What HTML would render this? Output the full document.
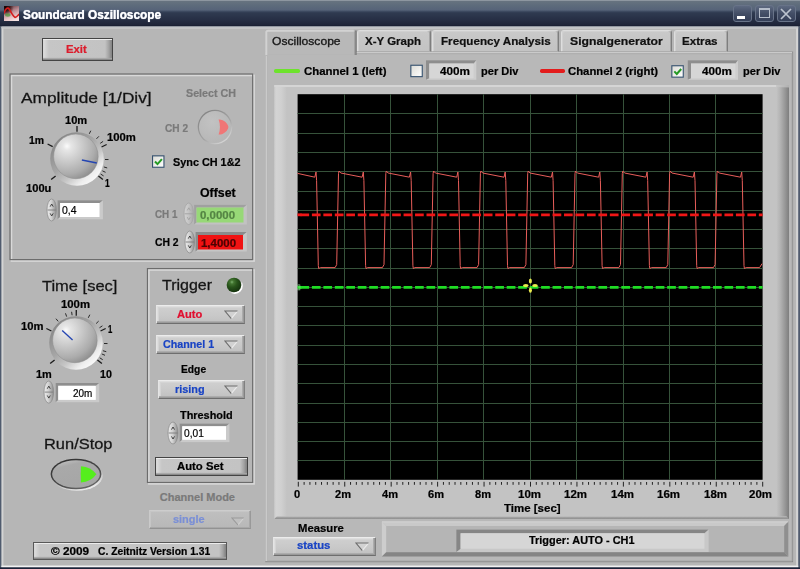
<!DOCTYPE html>
<html><head><meta charset="utf-8"><title>Soundcard Oszilloscope</title>
<style>
*{box-sizing:border-box;margin:0;padding:0}
html,body{width:800px;height:569px;overflow:hidden;background:#b6b6b6;font-family:"Liberation Sans",sans-serif;}
#w{position:absolute;left:0;top:0;width:800px;height:569px;background:#b6b6b6;overflow:hidden}
.a{position:absolute}
.t{position:absolute;white-space:nowrap;font-weight:bold;transform-origin:0 50%;-webkit-text-stroke:.22px}

#title{left:0;top:0;width:800px;height:27px;z-index:0;background:linear-gradient(#8d96a0 0,#8d96a0 1px,#66727f 1.5px,#5c6a7b 6px,#566379 10px,#354158 12px,#2f3a50 13px,#262e44 20px,#1f2539 24.6px,#1a1e32 25.8px,#4a4e5c 26.5px,#4a4e5c 27px)}
.wb{position:absolute;top:5px;width:19px;height:17px;border-radius:3px;border:1px solid #687388;background:linear-gradient(#5d6980,#434e66 50%,#353f58)}
.btn{position:absolute;border:1px solid #444;background:linear-gradient(90deg,#e0e0e0 0,#d2d2d2 3px,#c6c6c6 6px,#c3c3c3 calc(100% - 7px),#a2a2a2 calc(100% - 3px),#7e7e7e 100%);box-shadow:inset 0 1px 0 #ececec,inset 0 -1px 0 #8a8a8a,inset 0 -2px 1px #a6a6a6}
.dd{position:absolute;background:linear-gradient(#d0d0d0,#c8c8c8 60%,#c0c0c0);border:1px solid;border-color:#ececec #808080 #6e6e6e #e4e4e4;box-shadow:inset -1px -1px 0 #9a9a9a,inset -2px -2px 0 #acacac,inset 1px 1px 0 #dedede,inset 2px 2px 0 #d4d4d4}
.inp{position:absolute;background:#fff;border:1px solid;border-color:#6e6e6e #dcdcdc #e4e4e4 #6e6e6e;box-shadow:-1px -1px 0 #9c9c9c}
.fld{position:absolute;border:1px solid;border-color:#7a7a7a #d8d8d8 #dedede #7a7a7a;box-shadow:-1px -1px 0 #9a9a9a,inset 1px 1px 0 #a8a8a8}
.panel{position:absolute;border:1px solid;border-color:#8a8a8a #e6e6e6 #e6e6e6 #8a8a8a;box-shadow:inset 1px 1px 0 #dadada,inset -1px -1px 0 #9a9a9a}
.tab{position:absolute;top:30px;height:22.4px;background:linear-gradient(#c9c9c9,#c3c3c3);border:1px solid;border-color:#dcdcdc #7e7e7e #c3c3c3 #dedede;border-radius:3px 3px 0 0;box-shadow:inset -1px 0 0 #a6a6a6,inset 1px 1px 0 #d0d0d0}
.cb{position:absolute;width:12.6px;height:12.6px;border:1px solid #1c5180;background:linear-gradient(135deg,#dcdcd7,#ffffff)}

</style></head><body>
<div id="w">
<div class="a" id="title"></div>
<svg class="a" style="left:0;top:26px" width="800" height="543" viewBox="0 26 800 543"><rect x="0" y="26.4" width="800" height="542.6" fill="#505b6e"/><rect x="1.4" y="27" width="796.8" height="540.4" fill="#d4d4d4"/><rect x="1.4" y="26.4" width="796.8" height="2" fill="#c2c3c7"/><rect x="3.4" y="28.6" width="792.7" height="537" fill="#b6b6b6"/><rect x="1.4" y="565.7" width="796.8" height="1.7" fill="#f2f2f2"/><rect x="0" y="567.4" width="800" height="1.6" fill="#1c2238"/></svg>
<svg class="a" style="left:3.9px;top:5.9px" width="15.2" height="15.2" viewBox="0 0 16 16"><defs><linearGradient id="ig" x1=".2" y1="0" x2=".6" y2="1"><stop offset="0" stop-color="#5a3a40"/><stop offset=".4" stop-color="#b88890"/><stop offset=".75" stop-color="#e8c4c6"/><stop offset="1" stop-color="#f4e2e2"/></linearGradient><radialGradient id="ib" cx="10%" cy="8%" r="55%"><stop offset="0" stop-color="#100000"/><stop offset=".5" stop-color="#300808" stop-opacity=".8"/><stop offset="1" stop-color="#401010" stop-opacity="0"/></radialGradient></defs><rect width="16" height="16" fill="url(#ig)"/><rect width="16" height="16" fill="url(#ib)"/><ellipse cx="4" cy="9.4" rx="3" ry="1.8" fill="#4c9a3c" opacity=".75"/><path d="M0 7.6 C1.5 3,3.6 0.8,5.4 3.2 C7.5 6,9.5 11,11.8 12 C13 12,14.5 10,16 8.6" fill="none" stroke="#d41c1c" stroke-width="1.7"/></svg>
<div class="wb" style="left:732.5px"></div><div class="wb" style="left:754.5px"></div><div class="wb" style="left:776.5px"></div>
<div class="a" style="left:737px;top:15.7px;width:7.5px;height:3.3px;background:#fff"></div>
<div class="a" style="left:759px;top:8.4px;width:10.5px;height:10px;border:1px solid #b4bcc9;border-top:2.6px solid #b4bcc9"></div>
<svg class="a" style="left:778px;top:6px" width="16" height="16"><path d="M3 3 L13 13 M13 3 L3 13" stroke="#bcc3cf" stroke-width="1.7" fill="none"/></svg>
<div class="tab" style="left:357px;width:73.5px"></div>
<div class="tab" style="left:431.8px;width:127.6px"></div>
<div class="tab" style="left:561px;width:111px"></div>
<div class="tab" style="left:673.8px;width:54px"></div>
<svg class="a" style="left:260px;top:48px" width="540" height="520" viewBox="260 48 540 520"><rect x="265.3" y="51.6" width="527.8" height="510.6" fill="#858585"/><rect x="265.3" y="51.9" width="526.9" height="509.3" fill="#cacaca"/><rect x="267.3" y="53.2" width="524.9" height="508" fill="#a8a8a8"/><rect x="267.3" y="54.2" width="524.2" height="506.2" fill="#b8b8b8"/></svg>
<svg class="a" style="left:260px;top:26px" width="110" height="34" viewBox="260 26 110 34"><path d="M265.3 56 V32.5 Q265.3 30 267.8 30 H353.5 Q356.2 30 356.2 32.5 V54.6 H267.3 V56Z" fill="#b8b8b8" stroke="none"/><path d="M355.9 30.6 V55" stroke="#666" stroke-width="1.2" fill="none"/><path d="M354.7 31.4 V55" stroke="#a0a0a0" stroke-width="1.2" fill="none"/><path d="M266.3 55 V32.5 Q266.3 30.8 268.2 30.8 H353.8" stroke="#d2d2d2" stroke-width="1.9" fill="none"/></svg>
<div class="btn" style="left:42px;top:38px;width:70.5px;height:22.5px"></div>
<div class="btn" style="left:33px;top:542.3px;width:194px;height:17.5px;border-color:#585858"></div>
<div class="btn" style="left:154.5px;top:457px;width:93.5px;height:18.5px"></div>
<svg class="a" style="left:7px;top:71px" width="251" height="194" viewBox="7 71 251 194"><rect x="11.45" y="75.45" width="242.65" height="185.6" fill="none" stroke="#d9d9d9" stroke-width="1.6"/><rect x="10" y="74" width="242.65" height="185.6" fill="none" stroke="#6c6c6c" stroke-width="1.15"/></svg>
<svg class="a" style="left:144px;top:265px" width="114" height="222" viewBox="144 265 114 222"><rect x="148.9" y="270" width="105.2" height="213.9" fill="none" stroke="#d9d9d9" stroke-width="1.6"/><rect x="147.45" y="268.55" width="105.2" height="213.9" fill="none" stroke="#6c6c6c" stroke-width="1.15"/></svg>
<svg class="a" style="left:36.8px;top:119.4px" width="80" height="80" viewBox="-40 -40 80 80"><defs><radialGradient id="kd76" cx="30%" cy="27%" r="78%"><stop offset="0" stop-color="#fbfbfb"/><stop offset=".12" stop-color="#e6e6e6"/><stop offset=".4" stop-color="#cecece"/><stop offset=".8" stop-color="#acacac"/><stop offset="1" stop-color="#929292"/></radialGradient><linearGradient id="kr76" x1="0.15" y1="0.1" x2="0.85" y2="0.9"><stop offset="0" stop-color="#868686"/><stop offset=".42" stop-color="#a6a6a6"/><stop offset=".66" stop-color="#c6c6c6"/><stop offset=".86" stop-color="#eeeeee"/><stop offset="1" stop-color="#fafafa"/></linearGradient><filter id="kb76"><feGaussianBlur stdDeviation=".6"/></filter></defs><line x1="-21.37" y1="16.99" x2="-25.83" y2="20.54" stroke="#1a1a1a" stroke-width="1.3"/><line x1="-24.32" y1="-12.39" x2="-29.40" y2="-14.98" stroke="#1a1a1a" stroke-width="1.3"/><line x1="0.00" y1="-27.30" x2="0.00" y2="-33.00" stroke="#1a1a1a" stroke-width="1.3"/><line x1="24.54" y1="-11.97" x2="29.66" y2="-14.47" stroke="#1a1a1a" stroke-width="1.3"/><line x1="21.42" y1="16.92" x2="25.90" y2="20.45" stroke="#1a1a1a" stroke-width="1.3"/><line x1="12.27" y1="-25.17" x2="13.81" y2="-28.31" stroke="#2a2a2a" stroke-width="1"/><line x1="19.45" y1="-20.14" x2="21.88" y2="-22.66" stroke="#2a2a2a" stroke-width="1"/><line x1="23.21" y1="-15.66" x2="26.11" y2="-17.61" stroke="#2a2a2a" stroke-width="1"/><line x1="28.00" y1="0.49" x2="31.50" y2="0.55" stroke="#2a2a2a" stroke-width="1"/><line x1="26.85" y1="7.95" x2="30.20" y2="8.95" stroke="#2a2a2a" stroke-width="1"/><line x1="25.38" y1="11.83" x2="28.55" y2="13.31" stroke="#2a2a2a" stroke-width="1"/><line x1="23.61" y1="15.04" x2="26.57" y2="16.92" stroke="#2a2a2a" stroke-width="1"/><circle r="26.8" fill="url(#kr76)" filter="url(#kb76)"/><circle cx="-1.1" cy="-2.6" r="22.3" fill="url(#kd76)" stroke="#8c8c8c" stroke-width=".5"/><line x1="4.90" y1="1.00" x2="19.79" y2="4.03" stroke="#2445b2" stroke-width="1.35"/></svg>
<svg class="a" style="left:35.5px;top:303.4px" width="80" height="80" viewBox="-40 -40 80 80"><defs><radialGradient id="kd75" cx="30%" cy="27%" r="78%"><stop offset="0" stop-color="#fbfbfb"/><stop offset=".12" stop-color="#e6e6e6"/><stop offset=".4" stop-color="#cecece"/><stop offset=".8" stop-color="#acacac"/><stop offset="1" stop-color="#929292"/></radialGradient><linearGradient id="kr75" x1="0.15" y1="0.1" x2="0.85" y2="0.9"><stop offset="0" stop-color="#868686"/><stop offset=".42" stop-color="#a6a6a6"/><stop offset=".66" stop-color="#c6c6c6"/><stop offset=".86" stop-color="#eeeeee"/><stop offset="1" stop-color="#fafafa"/></linearGradient><filter id="kb75"><feGaussianBlur stdDeviation=".6"/></filter></defs><line x1="-21.37" y1="16.99" x2="-25.83" y2="20.54" stroke="#1a1a1a" stroke-width="1.3"/><line x1="-24.54" y1="-11.97" x2="-29.66" y2="-14.47" stroke="#1a1a1a" stroke-width="1.3"/><line x1="0.24" y1="-27.30" x2="0.29" y2="-33.00" stroke="#1a1a1a" stroke-width="1.3"/><line x1="24.54" y1="-11.97" x2="29.66" y2="-14.47" stroke="#1a1a1a" stroke-width="1.3"/><line x1="21.42" y1="16.92" x2="25.90" y2="20.45" stroke="#1a1a1a" stroke-width="1.3"/><line x1="-17.81" y1="-21.61" x2="-20.04" y2="-24.31" stroke="#2a2a2a" stroke-width="1"/><line x1="-9.35" y1="-26.39" x2="-10.51" y2="-29.69" stroke="#2a2a2a" stroke-width="1"/><line x1="-3.90" y1="-27.73" x2="-4.38" y2="-31.19" stroke="#2a2a2a" stroke-width="1"/><line x1="12.27" y1="-25.17" x2="13.81" y2="-28.31" stroke="#2a2a2a" stroke-width="1"/><line x1="20.14" y1="-19.45" x2="22.66" y2="-21.88" stroke="#2a2a2a" stroke-width="1"/><line x1="23.48" y1="-15.25" x2="26.42" y2="-17.16" stroke="#2a2a2a" stroke-width="1"/><line x1="28.00" y1="0.49" x2="31.50" y2="0.55" stroke="#2a2a2a" stroke-width="1"/><line x1="26.92" y1="7.72" x2="30.28" y2="8.68" stroke="#2a2a2a" stroke-width="1"/><line x1="25.77" y1="10.94" x2="29.00" y2="12.31" stroke="#2a2a2a" stroke-width="1"/><line x1="23.75" y1="14.84" x2="26.71" y2="16.69" stroke="#2a2a2a" stroke-width="1"/><circle r="26.8" fill="url(#kr75)" filter="url(#kb75)"/><circle cx="-1.1" cy="-2.6" r="22.3" fill="url(#kd75)" stroke="#8c8c8c" stroke-width=".5"/><line x1="-3.42" y1="-3.08" x2="-13.82" y2="-12.45" stroke="#2445b2" stroke-width="1.35"/></svg>
<svg class="a" style="left:44.90px;top:196.50px" width="13.4" height="26" viewBox="-6.7 -13 13.4 26"><defs><linearGradient id="sp1" x1="0" x2="1"><stop offset="0" stop-color="#eeeeee"/><stop offset=".45" stop-color="#d2d2d2"/><stop offset="1" stop-color="#8c8c8c"/></linearGradient></defs><ellipse rx="4.7" ry="11" fill="url(#sp1)" stroke="#8a8a8a" stroke-width=".7"/><line x1="-4.2" y1="0" x2="4.2" y2="0" stroke="#7c7c7c" stroke-width=".9"/><path d="M-1.5 -3.4 L0 -6 L1.5 -3.4" fill="none" stroke="#3a3a3a" stroke-width=".95"/><path d="M-1.5 3.4 L0 6 L1.5 3.4" fill="none" stroke="#3a3a3a" stroke-width=".95"/></svg>
<svg class="a" style="left:181.90px;top:201.40px" width="13.6" height="25.6" viewBox="-6.8 -12.8 13.6 25.6"><defs><linearGradient id="sp2" x1="0" x2="1"><stop offset="0" stop-color="#d2d2d2"/><stop offset=".45" stop-color="#c6c6c6"/><stop offset="1" stop-color="#a6a6a6"/></linearGradient></defs><ellipse rx="4.8" ry="10.8" fill="url(#sp2)" stroke="#a4a4a4" stroke-width=".7"/><line x1="-4.3" y1="0" x2="4.3" y2="0" stroke="#a0a0a0" stroke-width=".9"/><path d="M-1.5 -3.4 L0 -6 L1.5 -3.4" fill="none" stroke="#a2a2a2" stroke-width=".95"/><path d="M-1.5 3.4 L0 6 L1.5 3.4" fill="none" stroke="#a2a2a2" stroke-width=".95"/></svg>
<svg class="a" style="left:182.90px;top:229.00px" width="13.6" height="26" viewBox="-6.8 -13 13.6 26"><defs><linearGradient id="sp3" x1="0" x2="1"><stop offset="0" stop-color="#eeeeee"/><stop offset=".45" stop-color="#d2d2d2"/><stop offset="1" stop-color="#8c8c8c"/></linearGradient></defs><ellipse rx="4.8" ry="11" fill="url(#sp3)" stroke="#8a8a8a" stroke-width=".7"/><line x1="-4.3" y1="0" x2="4.3" y2="0" stroke="#7c7c7c" stroke-width=".9"/><path d="M-1.5 -3.4 L0 -6 L1.5 -3.4" fill="none" stroke="#3a3a3a" stroke-width=".95"/><path d="M-1.5 3.4 L0 6 L1.5 3.4" fill="none" stroke="#3a3a3a" stroke-width=".95"/></svg>
<svg class="a" style="left:42.20px;top:378.90px" width="13.6" height="26.2" viewBox="-6.8 -13.1 13.6 26.2"><defs><linearGradient id="sp4" x1="0" x2="1"><stop offset="0" stop-color="#eeeeee"/><stop offset=".45" stop-color="#d2d2d2"/><stop offset="1" stop-color="#8c8c8c"/></linearGradient></defs><ellipse rx="4.8" ry="11.1" fill="url(#sp4)" stroke="#8a8a8a" stroke-width=".7"/><line x1="-4.3" y1="0" x2="4.3" y2="0" stroke="#7c7c7c" stroke-width=".9"/><path d="M-1.5 -3.4 L0 -6 L1.5 -3.4" fill="none" stroke="#3a3a3a" stroke-width=".95"/><path d="M-1.5 3.4 L0 6 L1.5 3.4" fill="none" stroke="#3a3a3a" stroke-width=".95"/></svg>
<svg class="a" style="left:166.00px;top:419.50px" width="14" height="26" viewBox="-7 -13 14 26"><defs><linearGradient id="sp5" x1="0" x2="1"><stop offset="0" stop-color="#eeeeee"/><stop offset=".45" stop-color="#d2d2d2"/><stop offset="1" stop-color="#8c8c8c"/></linearGradient></defs><ellipse rx="5" ry="11" fill="url(#sp5)" stroke="#8a8a8a" stroke-width=".7"/><line x1="-4.5" y1="0" x2="4.5" y2="0" stroke="#7c7c7c" stroke-width=".9"/><path d="M-1.5 -3.4 L0 -6 L1.5 -3.4" fill="none" stroke="#3a3a3a" stroke-width=".95"/><path d="M-1.5 3.4 L0 6 L1.5 3.4" fill="none" stroke="#3a3a3a" stroke-width=".95"/></svg>
<svg class="a" style="left:56px;top:199px" width="49" height="23" viewBox="56 199 49 23"><rect x="57.5" y="200.2" width="45.4" height="19.1" fill="#cacaca"/><path d="M57.5 200.2 H102.9 L99.5 203 H60.1 V217 L57.5 219.3 Z" fill="#8e8e8e"/><rect x="60.1" y="203" width="39.4" height="14" fill="#fff"/></svg>
<svg class="a" style="left:54px;top:382px" width="47" height="23" viewBox="54 382 47 23"><rect x="55.6" y="383" width="43.6" height="19.2" fill="#cacaca"/><path d="M55.6 383 H99.2 L95.8 385.8 H58.2 V399.9 L55.6 402.2 Z" fill="#8e8e8e"/><rect x="58.2" y="385.8" width="37.6" height="14.1" fill="#fff"/></svg>
<svg class="a" style="left:178px;top:422px" width="53" height="22" viewBox="178 422 53 22"><rect x="179.6" y="423.4" width="49.8" height="18.7" fill="#cacaca"/><path d="M179.6 423.4 H229.4 L226 426.2 H182.2 V439.8 L179.6 442.1 Z" fill="#8e8e8e"/><rect x="182.2" y="426.2" width="43.8" height="13.6" fill="#fff"/></svg>
<svg class="a" style="left:193px;top:203px" width="56" height="23" viewBox="193 203 56 23"><rect x="194.1" y="204.7" width="52.7" height="19.8" fill="#c2c2c2"/><path d="M194.1 204.7 H246.8 L243.5 207.5 H196.5 V222.5 L194.1 224.5 Z" fill="#a0a0a0"/><rect x="196.5" y="207.5" width="47" height="15" fill="#97d877"/></svg>
<svg class="a" style="left:194px;top:231px" width="55" height="23" viewBox="194 231 55 23"><rect x="195.5" y="232" width="51.3" height="19.5" fill="#c6c6c6"/><path d="M195.5 232 H246.8 L243 235 H198 V249.5 L195.5 251.5 Z" fill="#8a8a8a"/><rect x="198" y="235" width="45" height="14.5" fill="#f01212"/></svg>
<svg class="a" style="left:194.6px;top:106.6px" width="40" height="40" viewBox="-20 -20 40 40"><defs><linearGradient id="rb" x1=".2" y1=".1" x2=".8" y2=".9"><stop offset="0" stop-color="#868686"/><stop offset=".6" stop-color="#a4a4a4"/><stop offset="1" stop-color="#d4d4d4"/></linearGradient><radialGradient id="rbi" cx="40%" cy="35%" r="70%"><stop offset="0" stop-color="#c2c2c2"/><stop offset="1" stop-color="#b6b6b6"/></radialGradient></defs><circle r="17.3" fill="url(#rb)"/><circle r="16" fill="url(#rbi)"/><path d="M3.6 -7.6 C8.5 -8,13.2 -3.5,13.4 0 C13.2 3.5,8.5 8,3.6 7.6 C5.4 3,5.4 -3,3.6 -7.6Z" fill="#f07676" filter="url(#bl)"/><defs><filter id="bl"><feGaussianBlur stdDeviation=".5"/></filter></defs></svg>
<svg class="a" style="left:151px;top:154px" width="16" height="16" viewBox="151 154 16 16"><defs><linearGradient id="cg151" x1="0" y1="0" x2="1" y2="1"><stop offset="0" stop-color="#dcdcd6"/><stop offset="1" stop-color="#ffffff"/></linearGradient></defs><rect x="152.55" y="155.85" width="11.4" height="11.4" fill="url(#cg151)" stroke="#34506e" stroke-width="1.1"/><path d="M155 161.5 l2.5 2.6 l4.4 -5" fill="none" stroke="#249a24" stroke-width="2"/></svg>
<svg class="a" style="left:409px;top:63px" width="16" height="16" viewBox="409 63 16 16"><defs><linearGradient id="cg409" x1="0" y1="0" x2="1" y2="1"><stop offset="0" stop-color="#dcdcd6"/><stop offset="1" stop-color="#ffffff"/></linearGradient></defs><rect x="410.85" y="65.25" width="11.4" height="11.4" fill="url(#cg409)" stroke="#34506e" stroke-width="1.1"/></svg>
<svg class="a" style="left:670px;top:64px" width="16" height="16" viewBox="670 64 16 16"><defs><linearGradient id="cg670" x1="0" y1="0" x2="1" y2="1"><stop offset="0" stop-color="#dcdcd6"/><stop offset="1" stop-color="#ffffff"/></linearGradient></defs><rect x="671.85" y="65.75" width="11.4" height="11.4" fill="url(#cg670)" stroke="#34506e" stroke-width="1.1"/><path d="M674.3 71.4 l2.5 2.6 l4.4 -5" fill="none" stroke="#249a24" stroke-width="2"/></svg>
<svg class="a" style="left:221.9px;top:272.9px" width="24" height="24" viewBox="-12 -12 24 24"><defs><radialGradient id="lg" cx="36%" cy="30%" r="72%"><stop offset="0" stop-color="#7cb06e"/><stop offset=".18" stop-color="#427430"/><stop offset=".5" stop-color="#27531a"/><stop offset="1" stop-color="#15320e"/></radialGradient><linearGradient id="lr" x1=".15" y1=".15" x2=".85" y2=".85"><stop offset="0" stop-color="#a8a8a8"/><stop offset=".55" stop-color="#b8b8b8"/><stop offset=".8" stop-color="#ffffff"/></linearGradient><filter id="lb"><feGaussianBlur stdDeviation=".45"/></filter></defs><circle cx=".7" cy=".8" r="8.1" fill="url(#lr)" filter="url(#lb)"/><circle r="7.3" fill="url(#lg)"/></svg>
<div class="dd" style="left:156.3px;top:305px;width:88.8px;height:19.3px"></div>
<svg class="a" style="left:224px;top:310.05px" width="15" height="10"><path d="M1 1 L13.6 1 L7.3 8.6 Z" fill="#d2d2d2" stroke="none"/><path d="M13.6 1 L7.3 8.6" stroke="#ececec" stroke-width="1.1" fill="none"/><path d="M7.3 8.6 L1 1 L13.6 1" stroke="#6e6e6e" stroke-width="1.1" fill="none"/></svg>
<div class="dd" style="left:156.3px;top:335px;width:88.8px;height:19.3px"></div>
<svg class="a" style="left:224px;top:340.05px" width="15" height="10"><path d="M1 1 L13.6 1 L7.3 8.6 Z" fill="#d2d2d2" stroke="none"/><path d="M13.6 1 L7.3 8.6" stroke="#ececec" stroke-width="1.1" fill="none"/><path d="M7.3 8.6 L1 1 L13.6 1" stroke="#6e6e6e" stroke-width="1.1" fill="none"/></svg>
<div class="dd" style="left:157.6px;top:379.8px;width:87.6px;height:19.3px"></div>
<svg class="a" style="left:224px;top:384.85px" width="15" height="10"><path d="M1 1 L13.6 1 L7.3 8.6 Z" fill="#d2d2d2" stroke="none"/><path d="M13.6 1 L7.3 8.6" stroke="#ececec" stroke-width="1.1" fill="none"/><path d="M7.3 8.6 L1 1 L13.6 1" stroke="#6e6e6e" stroke-width="1.1" fill="none"/></svg>
<div class="dd" style="left:273.2px;top:536.5px;width:102.7px;height:19.6px"></div>
<svg class="a" style="left:355px;top:541.7px" width="15" height="10"><path d="M1 1 L13.6 1 L7.3 8.6 Z" fill="#d2d2d2" stroke="none"/><path d="M13.6 1 L7.3 8.6" stroke="#ececec" stroke-width="1.1" fill="none"/><path d="M7.3 8.6 L1 1 L13.6 1" stroke="#6e6e6e" stroke-width="1.1" fill="none"/></svg>
<div class="a" style="left:149.2px;top:509.7px;width:102.2px;height:19.5px;background:linear-gradient(#bfbfbf,#b8b8b8);border:1px solid;border-color:#cdcdcd #999 #929292 #cacaca;box-shadow:inset -1px -1px 0 #a8a8a8,inset 1px 1px 0 #c6c6c6"></div>
<svg class="a" style="left:231.3px;top:516.6px" width="15" height="10"><path d="M1 1 L12.8 1 L7 8 Z" fill="#c0c0c0" stroke="none"/><path d="M12.8 1 L7 8" stroke="#d2d2d2" stroke-width="1.1" fill="none"/><path d="M7 8 L1 1 L12.8 1" stroke="#9a9a9a" stroke-width="1.1" fill="none"/></svg>
<svg class="a" style="left:46.2px;top:455.3px" width="60" height="38" viewBox="-30 -19 60 38"><defs><linearGradient id="ro" x1=".25" y1="0" x2=".75" y2="1"><stop offset="0" stop-color="#b5b5b5"/><stop offset=".55" stop-color="#b5b5b5"/><stop offset="1" stop-color="#f4f4f4"/></linearGradient><linearGradient id="rm" x1=".2" y1="0" x2=".8" y2="1"><stop offset="0" stop-color="#303030"/><stop offset=".6" stop-color="#484848"/><stop offset="1" stop-color="#6c6c6c"/></linearGradient><linearGradient id="ri" x1=".1" y1="0" x2=".5" y2="1"><stop offset="0" stop-color="#c6c6c6"/><stop offset=".25" stop-color="#a9a9a9"/><stop offset="1" stop-color="#a6a6a6"/></linearGradient><filter id="rbl"><feGaussianBlur stdDeviation=".7"/></filter><filter id="rgl"><feGaussianBlur stdDeviation=".45"/></filter></defs><ellipse cx=".9" cy="1.2" rx="26" ry="15.6" fill="url(#ro)" filter="url(#rbl)"/><ellipse rx="25.4" ry="15.3" fill="url(#rm)"/><ellipse rx="23.9" ry="13.8" fill="url(#ri)"/><path d="M5 -7.8 Q14.8 -7.4,20.4 .3 Q14.8 8,5 8.5 Q4.3 0,5 -7.8Z" fill="#55ee1c" filter="url(#rgl)"/></svg>
<div class="a" style="left:273.8px;top:69.4px;width:26.6px;height:3.4px;border-radius:1.7px;background:#6de32c;filter:blur(.7px)"></div>
<div class="a" style="left:540px;top:69.4px;width:24.5px;height:3.4px;border-radius:1.7px;background:#e31c1c;filter:blur(.7px)"></div>
<svg class="a" style="left:425px;top:59px" width="54" height="23" viewBox="425 59 54 23"><rect x="426" y="60.3" width="50.3" height="19.5" fill="#cdcdcd"/><path d="M426 60.3 H476.3 L473.6 63.6 H429.3 V78.2 L426 79.8 Z" fill="#8e8e8e"/><rect x="429.3" y="63.6" width="44.3" height="14.6" fill="#d6d6d6"/></svg>
<svg class="a" style="left:686px;top:59px" width="54" height="23" viewBox="686 59 54 23"><rect x="687.7" y="60.3" width="50.3" height="19.5" fill="#cdcdcd"/><path d="M687.7 60.3 H738 L735.3 63.6 H691 V78.2 L687.7 79.8 Z" fill="#8e8e8e"/><rect x="691" y="63.6" width="44.3" height="14.6" fill="#d6d6d6"/></svg>
<svg class="a" style="left:270px;top:80px" width="524" height="444" viewBox="270 80 524 444"><defs><linearGradient id="gfl" x1="0" x2="1"><stop offset="0" stop-color="#cacaca"/><stop offset=".15" stop-color="#d4d4d4"/><stop offset=".55" stop-color="#d0d0d0"/><stop offset="1" stop-color="#c3c3c3"/></linearGradient><linearGradient id="gfr" x1="0" x2="1"><stop offset="0" stop-color="#c3c3c3"/><stop offset=".3" stop-color="#b4b4b4"/><stop offset=".7" stop-color="#969696"/><stop offset="1" stop-color="#7e7e7e"/></linearGradient><linearGradient id="gfb" x1="0" x2="0" y1="0" y2="1"><stop offset="0" stop-color="#c3c3c3"/><stop offset=".3" stop-color="#a6a6a6"/><stop offset="1" stop-color="#8e8e8e"/></linearGradient></defs><rect x="274.3" y="85" width="514.7" height="434" fill="#c3c3c3"/><rect x="274.3" y="85" width="12.6" height="434" fill="url(#gfl)"/><rect x="274.3" y="85" width="514.7" height="2" fill="#d5d5d5"/><rect x="776.3" y="85" width="12.7" height="434" fill="url(#gfr)"/><path d="M274.3 519 L277 516.2 H786.5 L789 519Z" fill="url(#gfb)"/><path d="M776.3 85 H789 V87.5 L776.3 87Z" fill="#c6c6c6" opacity=".7"/></svg>
<svg class="a" style="left:0;top:0" width="800" height="569" viewBox="0 0 800 569"><rect x="297.6" y="94.2" width="465" height="385.6" fill="#000"/><path d="M344.50 94.2 V479.8 M390.50 94.2 V479.8 M437.50 94.2 V479.8 M483.50 94.2 V479.8 M530.50 94.2 V479.8 M576.50 94.2 V479.8 M623.50 94.2 V479.8 M669.50 94.2 V479.8 M715.50 94.2 V479.8 M297.6 113.50 H762.6 M297.6 133.50 H762.6 M297.6 152.50 H762.6 M297.6 171.50 H762.6 M297.6 191.50 H762.6 M297.6 210.50 H762.6 M297.6 229.50 H762.6 M297.6 248.50 H762.6 M297.6 268.50 H762.6 M297.6 287.50 H762.6 M297.6 306.50 H762.6 M297.6 325.50 H762.6 M297.6 345.50 H762.6 M297.6 364.50 H762.6 M297.6 383.50 H762.6 M297.6 403.50 H762.6 M297.6 422.50 H762.6 M297.6 441.50 H762.6 M297.6 460.50 H762.6 " stroke="#36523a" stroke-width="1" fill="none"/><path d="M297.6 173.4 L314.8 177.2 L316.0 172.0 L316.6 180.6 L318.3 265.6 L318.7 268.5 L320.4 267.6 L335.1 267.6 L336.7 264.6 L338.5 173.6 L339.0 171.0 L340.8 173.0 L362.1 177.2 L363.3 172.0 L363.9 180.6 L365.6 265.6 L366.0 268.5 L367.7 267.6 L382.4 267.6 L384.0 264.6 L385.8 173.6 L386.3 171.0 L388.1 173.0 L409.4 177.2 L410.6 172.0 L411.2 180.6 L412.9 265.6 L413.3 268.5 L415.0 267.6 L429.7 267.6 L431.3 264.6 L433.1 173.6 L433.6 171.0 L435.4 173.0 L456.7 177.2 L457.9 172.0 L458.5 180.6 L460.2 265.6 L460.6 268.5 L462.3 267.6 L477.0 267.6 L478.6 264.6 L480.4 173.6 L480.9 171.0 L482.7 173.0 L504.0 177.2 L505.2 172.0 L505.8 180.6 L507.5 265.6 L507.9 268.5 L509.6 267.6 L524.3 267.6 L525.9 264.6 L527.7 173.6 L528.2 171.0 L530.0 173.0 L551.3 177.2 L552.5 172.0 L553.1 180.6 L554.8 265.6 L555.2 268.5 L556.9 267.6 L571.6 267.6 L573.2 264.6 L575.0 173.6 L575.5 171.0 L577.3 173.0 L598.6 177.2 L599.8 172.0 L600.4 180.6 L602.1 265.6 L602.5 268.5 L604.2 267.6 L618.9 267.6 L620.5 264.6 L622.3 173.6 L622.8 171.0 L624.6 173.0 L645.9 177.2 L647.1 172.0 L647.7 180.6 L649.4 265.6 L649.8 268.5 L651.5 267.6 L666.2 267.6 L667.8 264.6 L669.6 173.6 L670.1 171.0 L671.9 173.0 L693.2 177.2 L694.4 172.0 L695.0 180.6 L696.7 265.6 L697.1 268.5 L698.8 267.6 L713.5 267.6 L715.1 264.6 L716.9 173.6 L717.4 171.0 L719.2 173.0 L740.5 177.2 L741.7 172.0 L742.3 180.6 L744.0 265.6 L744.4 268.5 L746.1 267.6 L759.6 267.6 L762.1 263.6 " stroke="#e85e5a" stroke-width="1" fill="none" stroke-linejoin="round"/><line x1="297.6" y1="214.8" x2="762.6" y2="214.8" stroke="#f01616" stroke-width="2.8" stroke-dasharray="8.7 2.76" stroke-dashoffset="-2.84"/><line x1="297.6" y1="287.4" x2="762.6" y2="287.4" stroke="#1fdc24" stroke-width="2.8" stroke-dasharray="8.7 2.76" stroke-dashoffset="-2.84"/><rect x="297.6" y="213.4" width="4" height="2.8" fill="#f01616"/><rect x="297.6" y="286" width="4" height="2.8" fill="#1fdc24"/><rect x="297.9" y="284.9" width="2" height="5" fill="none" stroke="#9de89d" stroke-width=".6"/><g fill="#ecec4e"><ellipse cx="530.4" cy="281" rx="1.5" ry="2.6"/><ellipse cx="530.4" cy="290.2" rx="1.5" ry="2.6"/><ellipse cx="525.8" cy="285.6" rx="2.8" ry="1.5"/><ellipse cx="535" cy="285.6" rx="2.8" ry="1.5"/></g><path d="M298.30 481.8 V486.6 M304.11 482 V484.8 M309.91 482 V484.8 M315.72 482 V484.8 M321.52 482 V484.8 M327.32 482 V484.8 M333.13 482 V484.8 M338.94 482 V484.8 M344.74 481.8 V486.6 M350.55 482 V484.8 M356.35 482 V484.8 M362.16 482 V484.8 M367.96 482 V484.8 M373.76 482 V484.8 M379.57 482 V484.8 M385.38 482 V484.8 M391.18 481.8 V486.6 M396.99 482 V484.8 M402.79 482 V484.8 M408.60 482 V484.8 M414.40 482 V484.8 M420.21 482 V484.8 M426.01 482 V484.8 M431.81 482 V484.8 M437.62 481.8 V486.6 M443.43 482 V484.8 M449.23 482 V484.8 M455.03 482 V484.8 M460.84 482 V484.8 M466.64 482 V484.8 M472.45 482 V484.8 M478.25 482 V484.8 M484.06 481.8 V486.6 M489.87 482 V484.8 M495.67 482 V484.8 M501.48 482 V484.8 M507.28 482 V484.8 M513.09 482 V484.8 M518.89 482 V484.8 M524.69 482 V484.8 M530.50 481.8 V486.6 M536.31 482 V484.8 M542.11 482 V484.8 M547.91 482 V484.8 M553.72 482 V484.8 M559.52 482 V484.8 M565.33 482 V484.8 M571.13 482 V484.8 M576.94 481.8 V486.6 M582.75 482 V484.8 M588.55 482 V484.8 M594.36 482 V484.8 M600.16 482 V484.8 M605.96 482 V484.8 M611.77 482 V484.8 M617.58 482 V484.8 M623.38 481.8 V486.6 M629.18 482 V484.8 M634.99 482 V484.8 M640.80 482 V484.8 M646.60 482 V484.8 M652.40 482 V484.8 M658.21 482 V484.8 M664.01 482 V484.8 M669.82 481.8 V486.6 M675.62 482 V484.8 M681.43 482 V484.8 M687.24 482 V484.8 M693.04 482 V484.8 M698.85 482 V484.8 M704.65 482 V484.8 M710.45 482 V484.8 M716.26 481.8 V486.6 M722.07 482 V484.8 M727.87 482 V484.8 M733.67 482 V484.8 M739.48 482 V484.8 M745.28 482 V484.8 M751.09 482 V484.8 M756.89 482 V484.8 M762.70 481.8 V486.6 " stroke="#222" stroke-width="1" fill="none"/></svg>
<svg class="a" style="left:378px;top:518px" width="414" height="42" viewBox="378 518 414 42"><rect x="381.9" y="521.6" width="406.4" height="34.9" fill="#b5b5b5"/><path d="M381.9 521.6 H788.3 L784.2 526 H386.2Z" fill="#c9c9c9"/><path d="M381.9 521.6 L386.2 526 V552.2 L381.9 556.5Z" fill="#cdcdcd"/><path d="M788.3 521.6 V556.5 L784.2 552.2 V526Z" fill="#8f8f8f"/><path d="M381.9 556.5 L386.2 552.2 H784.2 L788.3 556.5Z" fill="#858585"/><path d="M381.9 521.9 H788" stroke="#d8d8d8" stroke-width=".8"/></svg>
<svg class="a" style="left:455px;top:528px" width="256" height="26" viewBox="455 528 256 26"><rect x="456.3" y="529.4" width="252.3" height="22.6" fill="#c8c8c8"/><path d="M456.3 529.4 H708.6 L704.4 533.3 H460.6 V548.7 L456.3 552 Z" fill="#868686"/><rect x="460.6" y="533.3" width="243.8" height="15.4" fill="#d6d6d6"/></svg>
<div class="t" style="left:23.0px;top:7.7px;font-size:13px;line-height:13px;color:#fff;transform:scaleX(0.910);text-shadow:0 0 1px #dfe6ff">Soundcard Oszilloscope</div>
<div class="t" style="left:65.8px;top:44.2px;font-size:11.5px;line-height:11.5px;color:#dc1c2c;transform:scaleX(0.986);">Exit</div>
<div class="t" style="left:21.0px;top:90.4px;font-size:15.3px;line-height:15.3px;font-weight:normal;color:#111;transform:scaleX(1.130);-webkit-text-stroke:.3px #222">Amplitude [1/Div]</div>
<div class="t" style="left:186.0px;top:87.7px;font-size:11px;line-height:11px;color:#7a7a7a;transform:scaleX(0.974);">Select CH</div>
<div class="t" style="left:165.0px;top:123.3px;font-size:11px;line-height:11px;color:#7a7a7a;transform:scaleX(0.918);">CH 2</div>
<div class="t" style="left:172.5px;top:156.7px;font-size:11px;line-height:11px;color:#000;transform:scaleX(0.986);">Sync CH 1&amp;2</div>
<div class="t" style="left:200.4px;top:186.8px;font-size:12px;line-height:12px;color:#000;transform:scaleX(1.027);">Offset</div>
<div class="t" style="left:155.4px;top:209.4px;font-size:11px;line-height:11px;color:#7a7a7a;transform:scaleX(0.894);">CH 1</div>
<div class="t" style="left:155.4px;top:236.9px;font-size:11px;line-height:11px;color:#000;transform:scaleX(0.942);">CH 2</div>
<div class="t" style="left:199.5px;top:209.7px;font-size:11px;line-height:11px;color:#548444;transform:scaleX(1.040);">0,0000</div>
<div class="t" style="left:201.0px;top:237.7px;font-size:11px;line-height:11px;color:#4a0404;transform:scaleX(1.040);">1,4000</div>
<div class="t" style="left:64.6px;top:115.1px;font-size:11px;line-height:11px;color:#000;transform:scaleX(1.008);">10m</div>
<div class="t" style="left:29.4px;top:134.9px;font-size:11px;line-height:11px;color:#000;transform:scaleX(0.949);">1m</div>
<div class="t" style="left:106.8px;top:132.0px;font-size:11px;line-height:11px;color:#000;transform:scaleX(1.027);">100m</div>
<div class="t" style="left:25.5px;top:183.3px;font-size:11px;line-height:11px;color:#000;transform:scaleX(1.013);">100u</div>
<div class="t" style="left:105.3px;top:178.4px;font-size:11px;line-height:11px;color:#000;transform:scaleX(0.767);">1</div>
<div class="t" style="left:61.9px;top:205.3px;font-size:11px;line-height:11px;font-weight:normal;color:#000;transform:scaleX(0.948);">0,4</div>
<div class="t" style="left:42.2px;top:277.6px;font-size:15.3px;line-height:15.3px;font-weight:normal;color:#111;transform:scaleX(1.077);-webkit-text-stroke:.3px #222">Time [sec]</div>
<div class="t" style="left:60.6px;top:299.2px;font-size:11px;line-height:11px;color:#000;transform:scaleX(1.031);">100m</div>
<div class="t" style="left:20.5px;top:321.1px;font-size:11px;line-height:11px;color:#000;transform:scaleX(1.021);">10m</div>
<div class="t" style="left:108.0px;top:323.7px;font-size:11px;line-height:11px;color:#000;transform:scaleX(0.702);">1</div>
<div class="t" style="left:36.4px;top:368.5px;font-size:11px;line-height:11px;color:#000;transform:scaleX(0.993);">1m</div>
<div class="t" style="left:99.6px;top:368.7px;font-size:11px;line-height:11px;color:#000;transform:scaleX(0.971);">10</div>
<div class="t" style="left:73.0px;top:388.1px;font-size:11px;line-height:11px;font-weight:normal;color:#000;transform:scaleX(0.902);">20m</div>
<div class="t" style="left:44.3px;top:436.1px;font-size:15.3px;line-height:15.3px;font-weight:normal;color:#111;transform:scaleX(1.074);-webkit-text-stroke:.3px #222">Run/Stop</div>
<div class="t" style="left:51.2px;top:546.5px;font-size:10px;line-height:10px;color:#000;transform:scaleX(1.176);">© 2009</div>
<div class="t" style="left:98.0px;top:546.5px;font-size:10px;line-height:10px;color:#000;transform:scaleX(1.030);">C. Zeitnitz Version 1.31</div>
<div class="t" style="left:161.6px;top:276.5px;font-size:15.3px;line-height:15.3px;font-weight:normal;color:#111;transform:scaleX(1.046);-webkit-text-stroke:.3px #222">Trigger</div>
<div class="t" style="left:177.4px;top:308.9px;font-size:11px;line-height:11px;color:#e01030;transform:scaleX(1.014);">Auto</div>
<div class="t" style="left:163.2px;top:338.7px;font-size:11px;line-height:11px;color:#1a44c4;transform:scaleX(0.974);">Channel 1</div>
<div class="t" style="left:180.9px;top:364.3px;font-size:11px;line-height:11px;color:#000;transform:scaleX(0.933);">Edge</div>
<div class="t" style="left:175.0px;top:383.7px;font-size:11px;line-height:11px;color:#1a44c4;transform:scaleX(0.988);">rising</div>
<div class="t" style="left:179.6px;top:410.0px;font-size:11px;line-height:11px;color:#000;transform:scaleX(0.991);">Threshold</div>
<div class="t" style="left:183.8px;top:428.3px;font-size:11px;line-height:11px;font-weight:normal;color:#000;transform:scaleX(0.924);">0,01</div>
<div class="t" style="left:177.4px;top:461.4px;font-size:11px;line-height:11px;color:#000;transform:scaleX(1.028);">Auto Set</div>
<div class="t" style="left:159.8px;top:491.7px;font-size:11px;line-height:11px;color:#7a7a7a;transform:scaleX(1.000);">Channel Mode</div>
<div class="t" style="left:173.0px;top:513.7px;font-size:11px;line-height:11px;color:#7a8fd6;transform:scaleX(0.994);">single</div>
<div class="t" style="left:272.0px;top:35.9px;font-size:11.5px;line-height:11.5px;font-weight:normal;color:#111;transform:scaleX(1.052);-webkit-text-stroke:.35px #222">Oscilloscope</div>
<div class="t" style="left:364.9px;top:35.9px;font-size:11.5px;line-height:11.5px;color:#111;transform:scaleX(0.999);">X-Y Graph</div>
<div class="t" style="left:440.6px;top:35.9px;font-size:11.5px;line-height:11.5px;color:#111;transform:scaleX(1.014);">Frequency Analysis</div>
<div class="t" style="left:569.6px;top:35.9px;font-size:11.5px;line-height:11.5px;color:#111;transform:scaleX(1.060);">Signalgenerator</div>
<div class="t" style="left:682.4px;top:35.7px;font-size:11.5px;line-height:11.5px;color:#111;transform:scaleX(1.012);">Extras</div>
<div class="t" style="left:303.5px;top:65.7px;font-size:11px;line-height:11px;color:#000;transform:scaleX(1.038);">Channel 1 (left)</div>
<div class="t" style="left:440.0px;top:65.7px;font-size:11px;line-height:11px;color:#000;transform:scaleX(1.066);">400m</div>
<div class="t" style="left:481.0px;top:65.7px;font-size:11px;line-height:11px;color:#000;transform:scaleX(1.003);">per Div</div>
<div class="t" style="left:568.0px;top:65.7px;font-size:11px;line-height:11px;color:#000;transform:scaleX(1.030);">Channel 2 (right)</div>
<div class="t" style="left:701.5px;top:65.7px;font-size:11px;line-height:11px;color:#000;transform:scaleX(1.063);">400m</div>
<div class="t" style="left:742.5px;top:65.7px;font-size:11px;line-height:11px;color:#000;transform:scaleX(1.005);">per Div</div>
<div class="t" style="left:294.2px;top:488.7px;font-size:11px;line-height:11px;color:#000;transform:scaleX(1.012);">0</div>
<div class="t" style="left:335.1px;top:488.7px;font-size:11px;line-height:11px;color:#000;transform:scaleX(1.006);">2m</div>
<div class="t" style="left:381.6px;top:488.7px;font-size:11px;line-height:11px;color:#000;transform:scaleX(1.006);">4m</div>
<div class="t" style="left:428.1px;top:488.7px;font-size:11px;line-height:11px;color:#000;transform:scaleX(1.006);">6m</div>
<div class="t" style="left:474.6px;top:488.7px;font-size:11px;line-height:11px;color:#000;transform:scaleX(1.006);">8m</div>
<div class="t" style="left:517.6px;top:488.7px;font-size:11px;line-height:11px;color:#000;transform:scaleX(1.044);">10m</div>
<div class="t" style="left:564.1px;top:488.7px;font-size:11px;line-height:11px;color:#000;transform:scaleX(1.044);">12m</div>
<div class="t" style="left:610.6px;top:488.7px;font-size:11px;line-height:11px;color:#000;transform:scaleX(1.044);">14m</div>
<div class="t" style="left:657.1px;top:488.7px;font-size:11px;line-height:11px;color:#000;transform:scaleX(1.044);">16m</div>
<div class="t" style="left:703.6px;top:488.7px;font-size:11px;line-height:11px;color:#000;transform:scaleX(1.044);">18m</div>
<div class="t" style="left:749.3px;top:488.7px;font-size:11px;line-height:11px;color:#000;transform:scaleX(1.044);">20m</div>
<div class="t" style="left:504.4px;top:502.7px;font-size:11px;line-height:11px;color:#000;transform:scaleX(1.044);">Time [sec]</div>
<div class="t" style="left:297.7px;top:522.5px;font-size:11px;line-height:11px;color:#000;transform:scaleX(1.026);">Measure</div>
<div class="t" style="left:296.8px;top:540.3px;font-size:11px;line-height:11px;color:#1a44c4;transform:scaleX(1.031);">status</div>
<div class="t" style="left:528.5px;top:535.2px;font-size:11px;line-height:11px;color:#000;transform:scaleX(0.992);">Trigger: AUTO - CH1</div>
</div>
</body></html>
